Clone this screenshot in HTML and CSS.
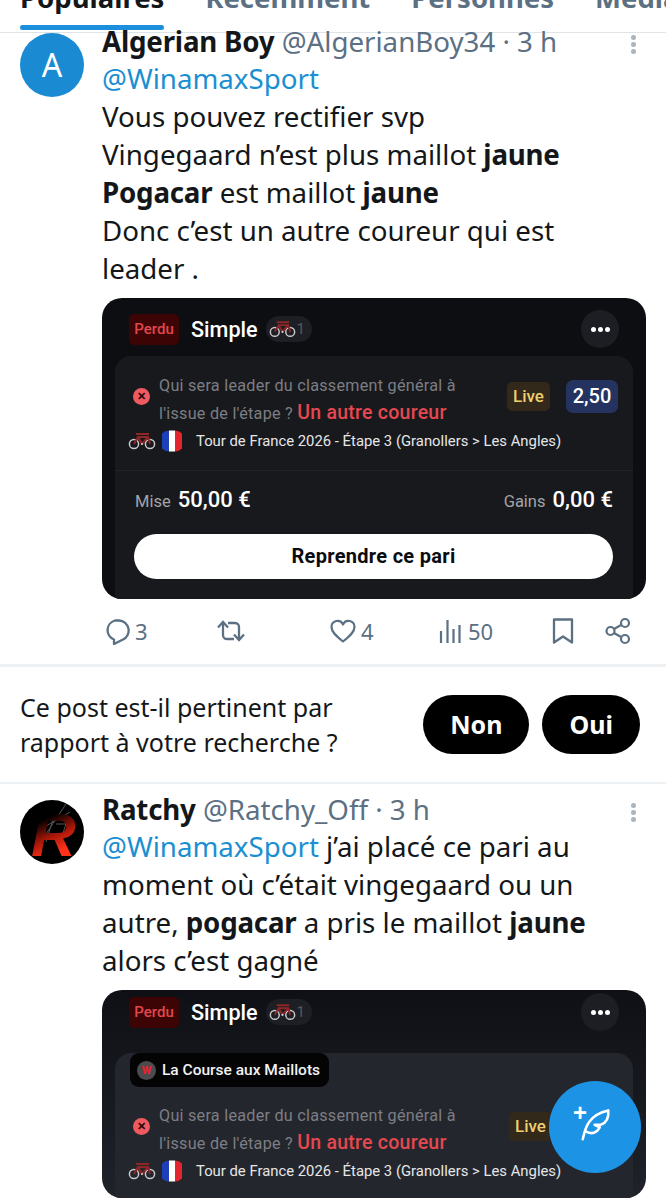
FILE: index.html
```html
<!DOCTYPE html>
<html lang="fr">
<head>
<meta charset="utf-8">
<title>Recherche</title>
<link rel="stylesheet" href="styles.css">
</head>
<body>
<svg class="defs" width="0" height="0">
  <symbol id="bike" viewBox="0 0 28 18">
    <circle cx="6" cy="12" r="4.6" fill="none" stroke="#c9c9cc" stroke-width="1.5"/>
    <circle cx="22" cy="12" r="4.6" fill="none" stroke="#c9c9cc" stroke-width="1.5"/>
    <path d="M8 2h13M6 12 10 5h10l2 7M10 5l4 7 6-7" fill="none" stroke="#8e2626" stroke-width="2"/>
    <circle cx="14" cy="12" r="1.1" fill="#c9c9cc"/>
  </symbol>
  <symbol id="flag" viewBox="0 0 20 22">
    <path d="M7 0.500A10 10.500 0 0 0 7 21.500Z" fill="#1d3fb8"/>
    <path d="M7 0.500H13V21.500H7Z" fill="#fff"/>
    <path d="M13 0.500A10 10.500 0 0 1 13 21.500Z" fill="#e3252f"/>
  </symbol>
</svg>
<div class="page">
  <nav class="tabs">
    <span class="tab tab-active">Populaires<i class="tab-bar"></i></span>
    <span class="tab">Récemment</span>
    <span class="tab">Personnes</span>
    <span class="tab">Médias</span>
  </nav>

  <article class="tweet tweet-first">
    <div class="avatar avatar-a">A</div>
    <div class="tweet-main">
      <div class="head"><b class="name">Algerian Boy</b> <span class="meta">@AlgerianBoy34 · 3 h</span>
        <span class="kebab"><i></i><i></i><i></i></span>
      </div>
      <div class="text"><span class="link">@WinamaxSport</span><br>Vous pouvez rectifier svp<br>Vingegaard n’est plus maillot <b>jaune</b><br><b>Pogacar</b> est maillot <b>jaune</b><br>Donc c’est un autre coureur qui est<br>leader .</div>
      <div class="bet bet-one">
        <div class="bet-head">
          <span class="lost">Perdu</span><span class="simple">Simple</span>
          <span class="count"><svg class="bike-sm"><use href="#bike"/></svg>1</span>
          <span class="more"><i></i><i></i><i></i></span>
        </div>
        <div class="panel">
          <div class="pick">
            <span class="cross">✕</span>
            <p class="question">Qui sera leader du classement général à<br>l'issue de l'étape ? <b>Un autre coureur</b></p>
            <span class="live">Live</span><span class="odd">2,50</span>
          </div>
          <div class="event"><svg class="bike"><use href="#bike"/></svg><svg class="flag"><use href="#flag"/></svg><span>Tour de France 2026 - Étape 3 (Granollers &gt; Les Angles)</span></div>
          <div class="stakes">
            <span class="stake">Mise <b>50,00 €</b></span>
            <span class="stake">Gains <b>0,00 €</b></span>
          </div>
          <div class="retake">Reprendre ce pari</div>
        </div>
      </div>
      <div class="actions">
        <span class="act act-reply"><svg viewBox="0 0 28 28"><path d="M12 3.500h4a10 10 0 0 1 4 19l-9 4.500v-4.500A10 10 0 0 1 12 3.500Z" fill="none" stroke="#5b7083" stroke-width="2.300" stroke-linejoin="round"/></svg>3</span>
        <span class="act act-rt"><svg viewBox="0 0 30 28"><path d="M7 6v12a4 4 0 0 0 4 4h7M2 10.500 7 5l5 5.500M23 22V10a4 4 0 0 0-4-4h-7M18 17.500l5 5.500 5-5.500" fill="none" stroke="#5b7083" stroke-width="2.300"/></svg></span>
        <span class="act act-like"><svg viewBox="0 0 28 28"><path d="M14 24.500C7 19 2.500 15 2.500 10A6 6 0 0 1 14 7.500 6 6 0 0 1 25.500 10C25.500 15 21 19 14 24.500Z" fill="none" stroke="#5b7083" stroke-width="2.200" stroke-linejoin="round"/></svg>4</span>
        <span class="act act-views"><svg viewBox="0 0 24 28"><path d="M3 14v12M9.500 3v23M15.500 12v14M21.500 8v18" fill="none" stroke="#5b7083" stroke-width="2.200"/></svg>50</span>
        <span class="act act-save"><svg viewBox="0 0 24 28"><path d="M3 2.500h18v23l-9-6-9 6Z" fill="none" stroke="#5b7083" stroke-width="2.300" stroke-linejoin="round"/></svg></span>
        <span class="act act-share"><svg viewBox="0 0 28 28"><circle cx="21" cy="6" r="4" fill="none" stroke="#5b7083" stroke-width="2.200"/><circle cx="6.500" cy="14" r="4" fill="none" stroke="#5b7083" stroke-width="2.200"/><circle cx="21" cy="22" r="4" fill="none" stroke="#5b7083" stroke-width="2.200"/><path d="M10 12l7.500-4.200M10 16l7.500 4.200" stroke="#5b7083" stroke-width="2.200"/></svg></span>
      </div>
    </div>
  </article>

  <section class="survey">
    <p class="survey-q">Ce post est-il pertinent par<br>rapport à votre recherche ?</p>
    <span class="pill">Non</span>
    <span class="pill">Oui</span>
  </section>

  <article class="tweet tweet-second">
    <div class="avatar avatar-r">
      <svg class="r-lines" viewBox="0 0 64 64"><path d="M26 26 50 12M34 16l-8 26M36 24h10l-4 12h-12M14 52 46 4" fill="none" stroke="#555" stroke-width="1"/></svg>
      <span class="r-letter">R</span>
    </div>
    <div class="tweet-main">
      <div class="head"><b class="name">Ratchy</b> <span class="meta">@Ratchy_Off · 3 h</span>
        <span class="kebab"><i></i><i></i><i></i></span>
      </div>
      <div class="text"><span class="link">@WinamaxSport</span> j’ai placé ce pari au<br>moment où c’était vingegaard ou un<br>autre, <b>pogacar</b> a pris le maillot <b>jaune</b><br>alors c’est gagné</div>
      <div class="bet bet-two">
        <div class="bet-head">
          <span class="lost">Perdu</span><span class="simple">Simple</span>
          <span class="count"><svg class="bike-sm"><use href="#bike"/></svg>1</span>
          <span class="more"><i></i><i></i><i></i></span>
        </div>
        <div class="panel">
          <div class="promo"><span class="promo-dot">W</span>La Course aux Maillots</div>
          <div class="pick">
            <span class="cross">✕</span>
            <p class="question">Qui sera leader du classement général à<br>l'issue de l'étape ? <b>Un autre coureur</b></p>
            <span class="live">Live</span>
          </div>
          <div class="event"><svg class="bike"><use href="#bike"/></svg><svg class="flag"><use href="#flag"/></svg><span>Tour de France 2026 - Étape 3 (Granollers &gt; Les Angles)</span></div>
        </div>
      </div>
    </div>
  </article>

  <button class="fab" type="button">
    <span class="fab-plus">+</span>
    <svg viewBox="0 0 36 40"><path d="M3 38C6 24 10 9 33 4 34 14 30 19 24 21L17 21 23 24C19 31 13 32 7 29" fill="none" stroke="#fff" stroke-width="3" stroke-linejoin="round" stroke-linecap="round"/></svg>
  </button>
</div>
</body>
</html>
```
FILE: styles.css
```css
* { box-sizing: border-box; }
html, body { margin: 0; padding: 0; background: #fff; }
body { font-family: "Noto Sans", "Open Sans", sans-serif; color: #14171a; }
.defs { position: absolute; }
.page { position: relative; width: 666px; height: 1200px; overflow: hidden; }
p { margin: 0; }

.tabs { display: flex; height: 33px; padding-left: 20px; gap: 41px; border-bottom: 1px solid #dfe4e8; overflow: hidden; align-items: flex-end; font-weight: 700; font-size: 27.500px; color: #5b7083; white-space: nowrap; }
.tab { position: relative; height: 44px; flex: none; line-height: 20px; }
.tab-active { color: #14171a; }
.tab-bar { position: absolute; left: 0; right: 0; bottom: 2px; height: 5px; border-radius: 3px; background: #1b8fdb; }

.tweet { display: flex; padding-left: 20px; }
.tweet-first { height: 634px; border-bottom: 3px solid #eef1f3; }
.tweet-second { padding-top: 16px; }
.avatar { flex: none; width: 64px; height: 64px; border-radius: 50%; }
.avatar-a { background: #1a8ad3; color: #fff; font-size: 32px; line-height: 64px; text-align: center; }
.avatar-r { position: relative; background: #000; overflow: hidden; }
.r-lines { position: absolute; inset: 0; width: 64px; height: 64px; }
.r-letter { position: absolute; left: 11px; top: 4px; padding-right: 6px; font: italic 700 62px/62px "Liberation Sans", sans-serif; background: linear-gradient(155deg, #000 25%, #a01508 48%, #ff3119 70%); -webkit-background-clip: text; background-clip: text; color: transparent; }

.tweet-main { width: 544px; margin-left: 18px; }
.head { position: relative; height: 37px; font-size: 27.700px; line-height: 18px; white-space: nowrap; }
.tweet-first .head { margin-top: -1px; height: 38px; }
.name { font-weight: 700; color: #14171a; letter-spacing: -0.2px; }
.meta { color: #5b7083; }
.kebab { position: absolute; left: 529px; top: 3px; display: flex; flex-direction: column; gap: 2.500px; }
.kebab i { display: block; width: 4.600px; height: 4.600px; border-radius: 50%; background: #a9b6c0; }
.text { font-size: 27.700px; line-height: 38px; color: #14171a; white-space: nowrap; margin-top: -10px; }
.tweet-first .text { margin-top: -11px; }
.text b { letter-spacing: -0.2px; }
.link { color: #1b8fd2; }

.bet { position: relative; margin-top: 11px; width: 544px; border-radius: 20px; overflow: hidden; background: #0d0e12; color: #fff; font-family: Roboto, sans-serif; }
.bet-one { height: 301px; }
.bet-two { height: 208px; background: linear-gradient(#0e1015, #20222a); }
.bet-head { display: flex; align-items: center; height: 58px; padding: 4px 27px 0; }
.bet-two .bet-head { height: 48px; padding: 0 27px 4px; }
.lost { display: block; width: 50px; height: 31px; border-radius: 5px; background: #3c0404; color: #e2474b; font-size: 15px; line-height: 31px; text-align: center; font-weight: 500; }
.simple { margin-left: 12px; font-size: 21.600px; font-weight: 500; }
.count { display: flex; align-items: center; gap: 1px; margin-left: 8px; height: 26px; padding: 0 7px 0 3px; border-radius: 13px; background: #1d1f24; color: #55585f; font-size: 15px; }
.bike-sm { width: 27px; height: 18px; }
.more { display: flex; align-items: center; justify-content: center; gap: 2px; margin-left: auto; width: 38px; height: 38px; border-radius: 50%; background: #1c1e23; }
.more i { display: block; width: 5px; height: 5px; border-radius: 50%; background: #fff; }

.panel { width: 518px; height: 243px; margin-left: 13px; border-radius: 16px 16px 0 0; background: #18191d; }
.bet-two .panel { height: 170px; background: #24262d; }
.pick { display: flex; align-items: center; height: 70px; padding: 11px 15px 0 18px; }
.cross { flex: none; width: 17px; height: 17px; border-radius: 50%; background: #ee5a5f; color: #23090a; font-size: 11px; line-height: 17px; text-align: center; font-weight: 900; }
.question { flex: none; width: 348px; margin: 5px 0 0 9px; font-size: 16.200px; line-height: 27px; color: #7c7e84; letter-spacing: 0.25px; white-space: nowrap; }
.question b { color: #e5484f; font-size: 19.500px; font-weight: 500; }
.live { display: block; width: 43px; height: 29px; border-radius: 5px; background: #33291a; color: #efcf6e; font-size: 17px; font-weight: 500; line-height: 29px; text-align: center; }
.odd { display: block; width: 52px; height: 33px; margin-left: 16px; border-radius: 7px; background: #24335f; font-size: 20px; font-weight: 500; line-height: 33px; text-align: center; }
.event { display: flex; align-items: center; padding-left: 13px; font-size: 14.850px; color: #e6e6e8; white-space: nowrap; border-bottom: 1px solid #24252b; height: 45px; padding-bottom: 15px; }
.bike { flex: none; width: 28px; height: 18px; }
.flag { flex: none; width: 20px; height: 22px; margin-left: 6px; margin-right: 14px; }
.stakes { display: flex; justify-content: space-between; align-items: baseline; padding: 16px 20px 0; height: 63px; font-size: 16.500px; color: #a3a4a8; }
.stake b { margin-left: 3px; color: #fff; font-size: 22px; font-weight: 500; }
.retake { width: 479px; height: 45px; margin-left: 19px; border-radius: 23px; background: #fff; color: #0b0c10; font-size: 20px; letter-spacing: 0.300px; font-weight: 700; line-height: 45px; text-align: center; }

.promo { display: flex; align-items: center; width: 199px; height: 34px; margin: 15px 0 0 15px; padding-left: 7px; border-radius: 9px; background: #040405; color: #f2f2f2; font-size: 15.500px; font-weight: 500; white-space: nowrap; }
.promo-dot { display: block; flex: none; width: 19px; height: 19px; margin-right: 6px; border-radius: 50%; background: #4b4b50; color: #e8222c; font-size: 11px; font-weight: 900; line-height: 19px; text-align: center; }
.bet-two .pick { height: 68px; margin-top: 4px; padding-top: 3px; }
.bet-two .question { width: 350px; }
.bet-two .event { height: 30px; margin-top: -3px; padding-bottom: 0; border: 0; }

.actions { position: relative; height: 66px; color: #5b7083; font-size: 22px; }
.act { position: absolute; top: 18px; display: flex; align-items: center; gap: 4px; height: 28px; line-height: 28px; }
.act svg { height: 28px; width: 28px; }
.act-reply { left: 1px; }
.act-rt { left: 114px; }
.act-rt svg { width: 30px; }
.act-like { left: 227px; }
.act-views { left: 336px; gap: 6px; }
.act-views svg { width: 24px; }
.act-save { left: 449px; }
.act-save svg { width: 24px; }
.act-share { left: 502px; }

.survey { display: flex; align-items: center; height: 117px; padding: 0 26px 0 20px; border-bottom: 2px solid #eef1f3; }
.survey-q { flex: 1; font-size: 25px; line-height: 35px; color: #14171a; white-space: nowrap; }
.pill { display: block; height: 59px; margin-left: 13px; padding: 0 27px; border-radius: 30px; background: #000; color: #fff; font-size: 25px; font-weight: 700; line-height: 59px; }

.fab { position: absolute; left: 549px; top: 1081px; width: 92px; height: 92px; padding: 0; border: 0; border-radius: 50%; background: #1d93e6; color: #fff; }
.fab svg { position: absolute; left: 31px; top: 26px; width: 31px; height: 34px; }
.fab-plus { position: absolute; left: 24px; top: 20px; font-size: 24px; line-height: 24px; font-weight: 700; }
```
